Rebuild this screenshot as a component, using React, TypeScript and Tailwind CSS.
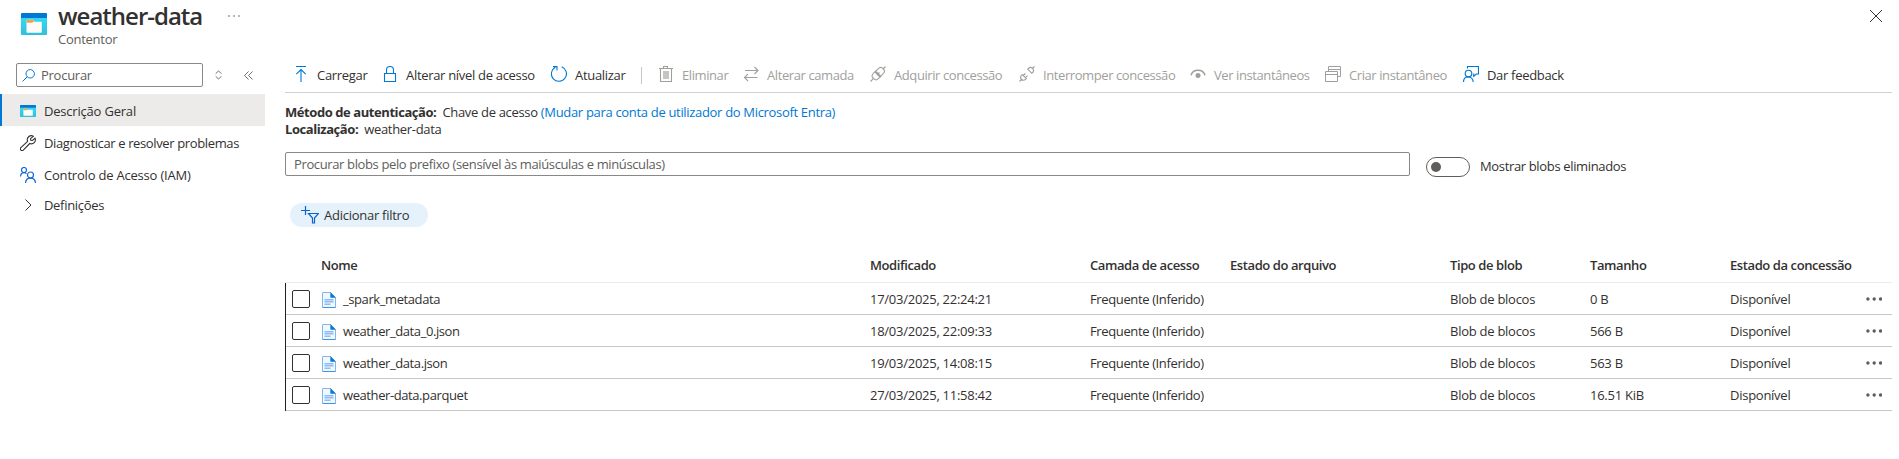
import React from "react";

type IconProps = { children: React.ReactNode; className?: string };

function Glyph({ children, className = "" }: IconProps) {
  return (
    <svg viewBox="0 0 16 16" fill="none" stroke="currentColor" className={`h-4 w-4 shrink-0 ${className}`}>
      {children}
    </svg>
  );
}

function ContainerIcon({ className }: { className: string }) {
  return (
    <svg viewBox="0 0 26 22" preserveAspectRatio="none" className={`shrink-0 ${className}`}>
      <defs>
        <linearGradient id="cyan" x1="0" y1="0" x2="0" y2="1">
          <stop offset="0" stopColor="#35d9f5" />
          <stop offset="1" stopColor="#30bfdc" />
        </linearGradient>
      </defs>
      <rect y="4" width="26" height="18" rx="0.8" fill="url(#cyan)" />
      <path d="M0.8 0H25.200a.8 .8 0 0 1 .8 .8V5H0V.8A.8 .8 0 0 1 .8 0Z" fill="#0078d4" />
      <path d="M5.500 7.500a.8 .8 0 0 1 .8-.8H12l1.500 2H20a.8 .8 0 0 1 .8 .8V19a.8 .8 0 0 1-.8 .8H6.300a.8 .8 0 0 1-.8-.8Z" fill="#fdfbf7" />
      <path d="M5.500 9.800V7.500a.8 .8 0 0 1 .8-.8h5.500a1 1 0 0 1 1 1v.8l-1.600 1.300Z" fill="#f0a04b" />
    </svg>
  );
}

function FileIcon() {
  return (
    <svg viewBox="0 0 14 16" className="h-4 w-3.5 shrink-0">
      <path d="M1 .5H8.500L13.500 5.500V15a.5 .5 0 0 1-.5 .5H1a.5 .5 0 0 1-.5-.5V1A.5 .5 0 0 1 1 .5Z" fill="#f0f7ff" stroke="#7dbaec" />
      <path d="M.5 15.500h13" stroke="#3f95dd" />
      <path d="M8.300 0 14 5.700H9a.7 .7 0 0 1-.7-.7Z" fill="#0b78d4" />
      <path d="M2.500 7.700h9M2.500 9.700h9M2.500 12.200h6" stroke="#8dbcf7" strokeWidth="1.400" />
    </svg>
  );
}

const icons = {
  upload: (
    <Glyph>
      <path d="M3 .5h10M8 16V3.500M3.300 8.200 8 3.500l4.700 4.700" strokeWidth="1.100" />
    </Glyph>
  ),
  lock: (
    <Glyph>
      <path d="M2.500 7.500h11v8h-11zM4.500 7.500V4a3.500 3.500 0 0 1 7 0v3.500" strokeWidth="1.100" />
    </Glyph>
  ),
  refresh: (
    <Glyph>
      <path d="M10.700 .8a7.500 7.500 0 1 1-6.400 .4M2 .6h4V4.600" strokeWidth="1.100" />
    </Glyph>
  ),
  trash: (
    <Glyph>
      <path d="M1 2.500h14M5.500 2.500v-2h4v2M2.500 2.500v13h11v-13" strokeWidth="1.100" />
      <path d="M5 5h6v8H5z" fill="currentColor" stroke="none" opacity=".6" />
    </Glyph>
  ),
  swap: (
    <Glyph>
      <path d="M2 4.500h13M11.500 1 15 4.500 11.500 8M14.500 11.500H1.500M5 8 1.500 11.500 5 15" strokeWidth="1.100" />
    </Glyph>
  ),
  plug: (
    <Glyph>
      <path d="M.5 15.500 3.300 12.700M12.700 3.300 15.500 .5M5.700 5.100 9.300 1.900C10.500 1 12 1.300 13.200 2.700S15 5.500 14 6.700L10.800 10.300ZM4.900 5.900C3.500 7.300 2 8.300 2 9.900c0 1.400 2.500 4.100 4.100 4.100 1.400 0 2.600-1.500 4-2.900ZM6.800 9.200 9.500 6.500" strokeWidth="1.100" />
    </Glyph>
  ),
  unplug: (
    <Glyph>
      <path d="M.5 15.500 2.800 13.200M13.200 2.800 15.500 .5M8.700 3.200l4.100 4.100C14.300 6.200 15 5.100 14.400 3.700 13.800 2.200 12.400 1.300 11.200 1.400 10.200 1.500 9.500 2.300 8.700 3.200ZM3.300 8.600l4.100 4.100C6.300 14 5.200 14.600 4 14.200 2.500 13.700 1.400 12.300 1.500 11 1.600 10 2.400 9.400 3.300 8.600ZM4.300 9.500l2-2M6.500 11.700l2-2" strokeWidth="1.100" />
    </Glyph>
  ),
  eye: (
    <Glyph>
      <path d="M1 9.300C3.200 2.700 12.800 2.700 15 9.300" strokeWidth="1.500" />
      <circle cx="8" cy="9.500" r="2.500" fill="currentColor" stroke="none" />
    </Glyph>
  ),
  windows: (
    <Glyph>
      <path d="M.5 5.500h12v10H.5zM.5 8.500h12M3.500 5.500v-5h12v10h-3M3.500 3.500h12" />
    </Glyph>
  ),
  feedback: (
    <Glyph>
      <path d="M4.500 2.500v-2h11v7.500h-2.200l-2.500 2.300V7.500M.5 16c0-3 1.800-5 4.700-5s4.700 2 5 5" strokeWidth="1.150" />
      <circle cx="5.500" cy="7.500" r="3.300" strokeWidth="1.150" />
    </Glyph>
  ),
};

type Command = { label: string; icon: keyof typeof icons; width: string; disabled?: boolean };

const primaryCommands: Command[] = [
  { label: "Carregar", icon: "upload", width: "w-[89px]" },
  { label: "Alterar nível de acesso", icon: "lock", width: "w-[169px]" },
  { label: "Atualizar", icon: "refresh", width: "w-[90px]" },
];

const secondaryCommands: Command[] = [
  { label: "Eliminar", icon: "trash", width: "w-[85px]", disabled: true },
  { label: "Alterar camada", icon: "swap", width: "w-[127px]", disabled: true },
  { label: "Adquirir concessão", icon: "plug", width: "w-[149px]", disabled: true },
  { label: "Interromper concessão", icon: "unplug", width: "w-[171px]", disabled: true },
  { label: "Ver instantâneos", icon: "eye", width: "w-[135px]", disabled: true },
  { label: "Criar instantâneo", icon: "windows", width: "w-[138px]", disabled: true },
  { label: "Dar feedback", icon: "feedback", width: "w-[116px]" },
];

function CommandButton({ label, icon, width, disabled }: Command) {
  return (
    <button className={`flex shrink-0 items-center gap-2 whitespace-nowrap ${width} ${disabled ? "tracking-[-0.410px] text-[#a19f9d]" : "tracking-[-0.310px]"}`}>
      <span className={`-mt-0.5 ${disabled ? "" : "text-[#0078d4]"}`}>{icons[icon]}</span>
      <span>{label}</span>
    </button>
  );
}

const blobs = [
  { name: "_spark_metadata", modified: "17/03/2025, 22:24:21", size: "0 B" },
  { name: "weather_data_0.json", modified: "18/03/2025, 22:09:33", size: "566 B" },
  { name: "weather_data.json", modified: "19/03/2025, 14:08:15", size: "563 B" },
  { name: "weather-data.parquet", modified: "27/03/2025, 11:58:42", size: "16.51 KiB" },
];

const columns = "grid grid-cols-[549px_220px_140px_220px_140px_140px_136px_26px] items-center";

function Sidebar() {
  return (
    <aside className="w-[265px] shrink-0 pt-[5px]">
      <div className="flex items-center pl-4 text-[#605e5c]">
        <div className="flex h-6 w-[187px] items-center rounded-[2px] border border-[#8a8886] pl-[5px]">
          <svg viewBox="0 0 13 13" fill="none" stroke="#0078d4" className="h-[13px] w-[13px]">
            <circle cx="8.200" cy="4.800" r="4.200" />
            <path d="M5.200 7.800.5 12.500" />
          </svg>
          <span className="ml-[6px]">Procurar</span>
        </div>
        <svg viewBox="0 0 7 10" fill="none" stroke="currentColor" className="ml-[12px] h-2.5 w-[7px]">
          <path d="M.7 3.700 3.500.9 6.300 3.700M.7 6.300 3.500 9.100 6.300 6.300" strokeWidth=".9" />
        </svg>
        <svg viewBox="0 0 9 9" fill="none" stroke="currentColor" className="ml-[22px] h-[9px] w-[9px]">
          <path d="M4.500.5.6 4.500 4.500 8.500M8.500.5 4.600 4.500 8.500 8.500" strokeWidth=".9" />
        </svg>
      </div>
      <nav className="mt-[7px]">
        <div className="flex h-8 items-center border-l-2 border-[#0078d4] bg-[#edebe9] pl-[18px] pt-0.5 font-medium">
          <ContainerIcon className="h-3 w-4" />
          <span className="ml-2 tracking-[-0.200px]">Descrição Geral</span>
        </div>
        <div className="mt-px flex h-8 items-center pl-5">
          <Glyph>
            <path d="M13.300 1.300A4 4 0 0 0 7.600 6.300L.9 12.600a1.600 1.600 0 0 0 2.400 2.500L9.700 8.500A4 4 0 0 0 15 3.200L12.500 5.500 10.800 5.200 10.500 3.600Z" strokeWidth="1.100" />
          </Glyph>
          <span className="ml-2 tracking-[-0.370px]">Diagnosticar e resolver problemas</span>
        </div>
        <div className="flex h-8 items-center pl-5">
          <Glyph className="text-[#1267d6]">
            <g strokeWidth="1.200">
              <circle cx="4" cy="3" r="2.500" />
              <path d="M.5 9.500C.7 7 2 5.600 4 5.600c1 0 1.900.3 2.500 1" />
              <circle cx="10.500" cy="8" r="3" />
              <path d="M5.500 16c.2-3 2.200-4.900 5-4.900s4.800 1.900 5 4.900" />
            </g>
          </Glyph>
          <span className="ml-2 tracking-[-0.200px]">Controlo de Acesso (IAM)</span>
        </div>
        <div className="flex h-7 items-center pl-5">
          <Glyph>
            <path d="M5.500 2.500 11 8l-5.500 5.500" />
          </Glyph>
          <span className="ml-2 tracking-[-0.310px]">Definições</span>
        </div>
      </nav>
    </aside>
  );
}

function BlobTable() {
  return (
    <div className="mt-[22px]">
      <div className={`${columns} h-[34px] border-b border-[#edebe9] pl-9 font-semibold tracking-[-0.410px]`}>
        <span>Nome</span>
        <span>Modificado</span>
        <span>Camada de acesso</span>
        <span>Estado do arquivo</span>
        <span>Tipo de blob</span>
        <span>Tamanho</span>
        <span className="whitespace-nowrap">Estado da concessão</span>
      </div>
      <div className="border-l border-[#201f1e]">
        {blobs.map((blob) => (
          <div key={blob.name} className="flex h-8 items-center border-b border-[#c8c6c4] pl-1.5 pt-px">
            <span className="h-[18px] w-[18px] rounded-[2px] border border-[#323130]" />
            <div className={`${columns} ml-[11px] pt-px`}>
              <span className="flex items-center gap-[7px] pl-px tracking-[-0.410px]">
                <FileIcon />
                {blob.name}
              </span>
              <span>{blob.modified}</span>
              <span className="tracking-[-0.370px]">Frequente (Inferido)</span>
              <span />
              <span>Blob de blocos</span>
              <span>{blob.size}</span>
              <span>Disponível</span>
              <svg viewBox="0 0 16 4" className="h-1 w-4 -translate-y-px fill-[#605e5c]">
                <circle cx="1.900" cy="2" r="1.700" />
                <circle cx="8.200" cy="2" r="1.700" />
                <circle cx="14.500" cy="2" r="1.700" />
              </svg>
            </div>
          </div>
        ))}
      </div>
    </div>
  );
}

export default function App() {
  return (
    <div className="h-[459px] w-[1899px] overflow-hidden bg-white font-['Open_Sans','Noto_Sans',sans-serif] text-[13px] leading-[17px] tracking-[-0.260px] text-[#323130]">
      <header className="flex h-[58px] justify-between pl-[21px] pr-[17px]">
        <div className="flex">
          <ContainerIcon className="mt-[13px] h-[22px] w-[26px]" />
          <div className="ml-[11px]">
            <h1 className="h-[31px] w-[144px] whitespace-nowrap text-2xl font-semibold leading-[31px] tracking-[-1px]">weather-data</h1>
            <p className="text-[#605e5c]">Contentor</p>
          </div>
          <svg viewBox="0 0 12 2" className="ml-[26px] mt-[15px] h-0.5 w-3 fill-[#605e5c]">
            <circle cx="1" cy="1" r=".8" />
            <circle cx="6" cy="1" r=".8" />
            <circle cx="11" cy="1" r=".8" />
          </svg>
        </div>
        <svg viewBox="0 0 12 12" fill="none" stroke="#323130" className="mt-[10px] h-3 w-3">
          <path d="M0 0 12 12M12 0 0 12" />
        </svg>
      </header>
      <div className="flex">
        <Sidebar />
        <main className="ml-5 w-[1607px] shrink-0">
          <div className="flex h-[35px] items-center border-b border-[#d2d0ce] pl-2">
            {primaryCommands.map((command) => (
              <CommandButton key={command.label} {...command} />
            ))}
            <span className="mr-4 h-[17px] w-px bg-[#c8c6c4]" />
            {secondaryCommands.map((command) => (
              <CommandButton key={command.label} {...command} />
            ))}
          </div>
          <div className="mt-[11px] tracking-[-0.320px]">
            <p>
              <b className="mr-[6px] tracking-[-0.430px]">Método de autenticação:</b>
              Chave de acesso <a className="text-[#0078d4]">(Mudar para conta de utilizador do Microsoft Entra)</a>
            </p>
            <p>
              <b className="mr-[6px] tracking-[-0.430px]">Localização:</b>weather-data
            </p>
          </div>
          <div className="mt-[14px] flex items-start">
            <div className="flex h-6 w-[1125px] items-center rounded-[2px] border border-[#8a8886] pl-2 tracking-[-0.370px] text-[#605e5c]">
              Procurar blobs pelo prefixo (sensível às maiúsculas e minúsculas)
            </div>
            <span className="ml-4 mt-[5px] flex h-5 w-11 items-center rounded-full border border-[#605e5c] pl-1">
              <span className="h-2.5 w-2.5 rounded-full bg-[#605e5c]" />
            </span>
            <span className="ml-[10px] mt-[6px] tracking-[-0.350px]">Mostrar blobs eliminados</span>
          </div>
          <button className="ml-[5px] mt-[26px] flex h-6 w-[138px] items-center rounded-full bg-[#e5f1fb] pl-[11px]">
            <svg viewBox="0 0 18 18" fill="none" stroke="#0b62d0" strokeWidth="1.200" className="h-[18px] w-[18px]">
              <path d="M4.500 0v9M0 4.500h9M7.500 7.500h10L13.500 12v5h-2v-5Z" />
            </svg>
            <span className="ml-[5px]">Adicionar filtro</span>
          </button>
          <BlobTable />
        </main>
      </div>
    </div>
  );
}
